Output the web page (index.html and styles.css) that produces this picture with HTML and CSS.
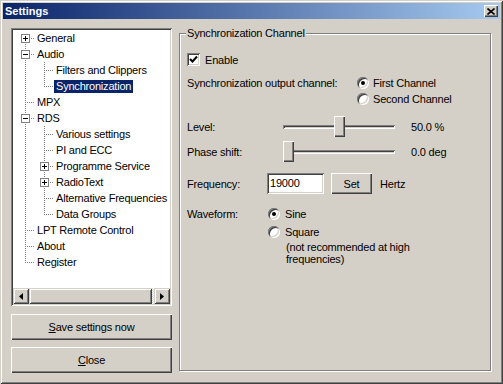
FILE: index.html
```html
<!DOCTYPE html>
<html lang="en">
<head>
  <meta charset="UTF-8">
  <title>Settings</title>
  <link rel="stylesheet" href="styles.css">
</head>
<body>
  <div class="window">
    <div class="titlebar">
      <span>Settings</span>
      <span class="close-x">
        <svg width="8" height="7" viewBox="0 0 8 7"><path d="M0.5 0.5 L7.5 6.5 M7.5 0.5 L0.5 6.5" stroke="#000" stroke-width="1.6"/></svg>
      </span>
    </div>

    <div class="main">
      <div class="left">
        <div class="tree">
          <div class="tree-items">
            <div class="node"><span class="ln first"><i class="exp plus"></i></span><span class="txt">General</span></div>
            <div class="node"><span class="ln tee"><i class="exp"></i></span><span class="txt">Audio</span></div>
            <div class="node"><span class="ln pipe"></span><span class="ln tee"></span><span class="txt">Filters and Clippers</span></div>
            <div class="node"><span class="ln pipe"></span><span class="ln last"></span><span class="txt sel">Synchronization</span></div>
            <div class="node"><span class="ln tee"></span><span class="txt">MPX</span></div>
            <div class="node"><span class="ln tee"><i class="exp"></i></span><span class="txt">RDS</span></div>
            <div class="node"><span class="ln pipe"></span><span class="ln tee"></span><span class="txt">Various settings</span></div>
            <div class="node"><span class="ln pipe"></span><span class="ln tee"></span><span class="txt">PI and ECC</span></div>
            <div class="node"><span class="ln pipe"></span><span class="ln tee"><i class="exp plus"></i></span><span class="txt">Programme Service</span></div>
            <div class="node"><span class="ln pipe"></span><span class="ln tee"><i class="exp plus"></i></span><span class="txt">RadioText</span></div>
            <div class="node"><span class="ln pipe"></span><span class="ln tee"></span><span class="txt">Alternative Frequencies</span></div>
            <div class="node"><span class="ln pipe"></span><span class="ln last"></span><span class="txt">Data Groups</span></div>
            <div class="node"><span class="ln tee"></span><span class="txt">LPT Remote Control</span></div>
            <div class="node"><span class="ln tee"></span><span class="txt">About</span></div>
            <div class="node"><span class="ln last"></span><span class="txt">Register</span></div>
          </div>
          <div class="hscroll">
            <span class="sb-btn"><svg width="4" height="7" viewBox="0 0 4 7"><path d="M4 0 L0 3.5 L4 7 Z" fill="#000"/></svg></span>
            <span class="sb-track"><span class="sb-thumb"></span></span>
            <span class="sb-btn"><svg width="4" height="7" viewBox="0 0 4 7"><path d="M0 0 L4 3.5 L0 7 Z" fill="#000"/></svg></span>
          </div>
        </div>
        <button class="btn big"><u>S</u>ave settings now</button>
        <button class="btn big close-btn"><u>C</u>lose</button>
      </div>

      <div class="group">
        <span class="legend">Synchronization Channel</span>

        <div class="row enable-row">
          <span class="check">
            <svg width="9" height="9" viewBox="0 0 9 9"><path d="M1 4 L3.5 6.5 L8 1.5" stroke="#000" stroke-width="2" fill="none"/></svg>
          </span>
          <span>Enable</span>
        </div>

        <div class="row channel-row">
          <span class="lbl channel-lbl">Synchronization output channel:</span>
          <div class="radios">
            <div class="opt"><span class="radio on"></span>First Channel</div>
            <div class="opt"><span class="radio"></span>Second Channel</div>
          </div>
        </div>

        <div class="row slider-row level-row">
          <span class="lbl slider-lbl">Level:</span>
          <span class="slider"><span class="groove"></span><span class="thumb" style="left: 51px"></span></span>
          <span class="value">50.0 %</span>
        </div>

        <div class="row slider-row phase-row">
          <span class="lbl slider-lbl">Phase shift:</span>
          <span class="slider"><span class="groove"></span><span class="thumb" style="left: 0px"></span></span>
          <span class="value">0.0 deg</span>
        </div>

        <div class="row freq-row">
          <span class="lbl freq-lbl">Frequency:</span>
          <span class="field">19000</span>
          <button class="btn set-btn">Set</button>
          <span class="unit">Hertz</span>
        </div>

        <div class="row wave-row">
          <span class="lbl wave-lbl">Waveform:</span>
          <div class="radios">
            <div class="opt wave-opt"><span class="radio on"></span>Sine</div>
            <div class="opt wave-opt"><span class="radio"></span>Square</div>
            <div class="note">(not recommended at high<br>frequencies)</div>
          </div>
        </div>
      </div>
    </div>
  </div>
</body>
</html>
```

FILE: styles.css
```css
* {
  box-sizing: border-box;
}
body {
  margin: 0;
  font-family: "Liberation Sans", Arial, sans-serif;
  font-size: 11px;
  letter-spacing: -0.2px;
  color: #000;
  background: #d4d0c8;
}
.window {
  width: 503px;
  height: 384px;
  padding: 3px;
  background: #d4d0c8;
  box-shadow: inset 1px 1px #d4d0c8, inset -1px -1px #404040, inset 2px 2px #fff, inset -2px -2px #808080;
}
.titlebar {
  height: 16px;
  display: flex;
  align-items: center;
  justify-content: space-between;
  padding: 0 2px;
  background: linear-gradient(to right, #0a246a, #a6caf0);
  color: #fff;
  font-weight: bold;
  letter-spacing: 0;
}
.close-x {
  width: 14px;
  height: 12px;
  display: flex;
  align-items: center;
  justify-content: center;
  background: #d4d0c8;
  box-shadow: inset 1px 1px #fff, inset -1px -1px #404040, inset -2px -2px #808080;
}
.main {
  display: flex;
  gap: 7px;
  padding: 9px 0 0 8px;
}
.left {
  width: 161px;
  display: flex;
  flex-direction: column;
}

/* tree view */
.tree {
  height: 278px;
  padding: 2px;
  background: #fff;
  box-shadow: inset 1px 1px #808080, inset -1px -1px #fff, inset 2px 2px #404040, inset -2px -2px #d4d0c8;
  display: flex;
  flex-direction: column;
}
.tree-items {
  flex: 1;
  padding-left: 3px;
  overflow: hidden;
}
.node {
  height: 16px;
  display: flex;
  align-items: center;
  white-space: nowrap;
}
.ln {
  position: relative;
  flex: none;
  width: 19px;
  height: 16px;
}
.ln::before {
  content: "";
  position: absolute;
  left: 9px;
  top: 0;
  width: 1px;
  height: 16px;
  background-image: linear-gradient(to bottom, #808080 50%, transparent 50%);
  background-size: 1px 2px;
}
.ln.first::before {
  top: 8px;
  height: 8px;
}
.ln.last::before {
  height: 9px;
}
.ln::after {
  content: "";
  position: absolute;
  left: 10px;
  top: 8px;
  width: 9px;
  height: 1px;
  background-image: linear-gradient(to right, transparent 50%, #808080 50%);
  background-size: 2px 1px;
}
.ln.pipe::after {
  display: none;
}
.exp {
  position: absolute;
  z-index: 1;
  left: 5px;
  top: 4px;
  width: 9px;
  height: 9px;
  border: 1px solid #808080;
  background: #fff;
}
.exp::before {
  content: "";
  position: absolute;
  left: 1px;
  top: 3px;
  width: 5px;
  height: 1px;
  background: #000;
}
.exp.plus::after {
  content: "";
  position: absolute;
  left: 3px;
  top: 1px;
  width: 1px;
  height: 5px;
  background: #000;
}
.txt {
  padding: 0 2px;
  line-height: 13px;
}
.txt.sel {
  background: #0a246a;
  color: #fff;
}

/* horizontal scroll bar */
.hscroll {
  height: 16px;
  display: flex;
}
.sb-btn {
  width: 16px;
  height: 16px;
  flex: none;
  display: flex;
  align-items: center;
  justify-content: center;
  background: #d4d0c8;
  box-shadow: inset 1px 1px #d4d0c8, inset -1px -1px #404040, inset 2px 2px #fff, inset -2px -2px #808080;
}
.sb-track {
  flex: 1;
  display: flex;
  background-color: #fff;
  background-image: repeating-conic-gradient(#d4d0c8 0 25%, #fff 0 50%);
  background-size: 2px 2px;
}
.sb-thumb {
  width: calc(100% - 2px);
  background: #d4d0c8;
  box-shadow: inset 1px 1px #d4d0c8, inset -1px -1px #404040, inset 2px 2px #fff, inset -2px -2px #808080;
}

/* buttons */
.btn {
  font-family: inherit;
  font-size: 11px;
  letter-spacing: -0.2px;
  color: #000;
  background: #d4d0c8;
  border: none;
  padding: 0;
  box-shadow: inset 1px 1px #fff, inset -1px -1px #404040, inset -2px -2px #808080;
}
.btn.big {
  height: 26px;
  width: 161px;
  margin-top: 8px;
}
.btn.close-btn {
  margin-top: 7px;
}

/* group box */
.group {
  position: relative;
  margin-top: 5px;
  width: 312px;
  height: 338px;
  border: 1px solid #808080;
  box-shadow: 1px 1px #fff, inset 1px 1px #fff;
  padding: 18px 7px 0 7px;
}
.legend {
  position: absolute;
  top: -7px;
  left: 6px;
  padding: 0 1px;
  line-height: 13px;
  background: #d4d0c8;
}
.row {
  display: flex;
  align-items: center;
}
.lbl {
  flex: none;
}
.enable-row {
  height: 15px;
  gap: 5px;
}
.check {
  width: 13px;
  height: 13px;
  display: flex;
  align-items: center;
  justify-content: center;
  background: #fff;
  box-shadow: inset 1px 1px #808080, inset -1px -1px #fff, inset 2px 2px #404040, inset -2px -2px #d4d0c8;
}
.channel-row {
  margin-top: 8px;
  align-items: flex-start;
}
.channel-lbl {
  width: 170px;
  line-height: 16px;
}
.opt {
  height: 16px;
  display: flex;
  align-items: center;
  gap: 4px;
}
.radio {
  position: relative;
  width: 12px;
  height: 12px;
  border-radius: 50%;
  background: #fff;
  box-shadow: inset 1px 1px #808080, inset -1px -1px #fff, inset 2px 2px #404040, inset -2px -2px #d4d0c8;
}
.radio.on::after {
  content: "";
  position: absolute;
  left: 4px;
  top: 4px;
  width: 4px;
  height: 4px;
  border-radius: 50%;
  background: #000;
}
.slider-row {
  height: 21px;
}
.level-row {
  margin-top: 9px;
}
.phase-row {
  margin-top: 4px;
}
.slider-lbl {
  width: 96px;
}
.slider {
  position: relative;
  width: 112px;
  height: 21px;
  display: flex;
  align-items: center;
}
.groove {
  width: 100%;
  height: 4px;
  box-shadow: inset 1px 1px #808080, inset -1px -1px #fff, inset 2px 2px #404040;
}
.thumb {
  position: absolute;
  top: 0;
  width: 11px;
  height: 21px;
  background: #d4d0c8;
  box-shadow: inset 1px 1px #fff, inset -1px -1px #404040, inset -2px -2px #808080;
}
.value {
  margin-left: 16px;
}
.freq-row {
  margin-top: 11px;
  height: 21px;
}
.freq-lbl {
  width: 80px;
}
.field {
  width: 57px;
  height: 21px;
  padding: 0 3px;
  line-height: 21px;
  background: #fff;
  box-shadow: inset 1px 1px #808080, inset -1px -1px #fff, inset 2px 2px #404040, inset -2px -2px #d4d0c8;
}
.set-btn {
  width: 41px;
  height: 21px;
  margin-left: 7px;
}
.unit {
  margin-left: 8px;
}
.wave-row {
  margin-top: 11px;
  align-items: flex-start;
}
.wave-lbl {
  width: 81px;
  line-height: 18px;
}
.wave-opt {
  height: 18px;
  gap: 5px;
}
.note {
  padding-left: 18px;
  line-height: 12px;
}
```
